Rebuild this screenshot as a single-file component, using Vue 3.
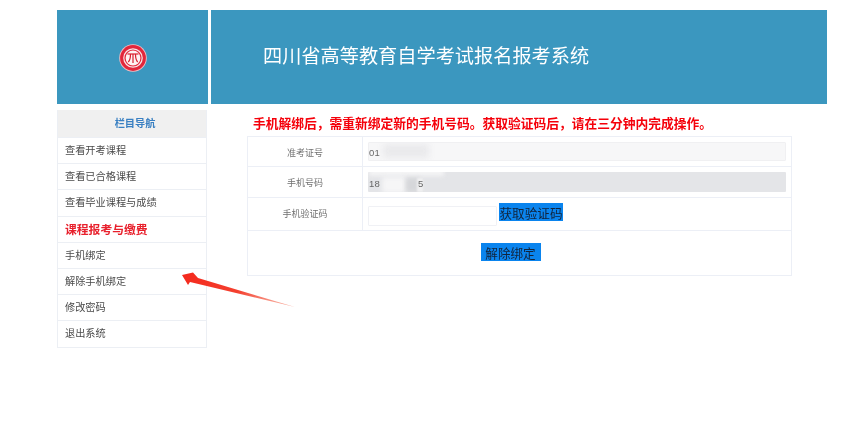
<template>
  <div class="page">
    <header class="top">
      <div class="logo-box">
        <svg class="logo" width="28" height="28" viewBox="0 0 28 28">
          <circle cx="14" cy="14" r="13.8" fill="#f2bcc1" />
          <circle cx="14" cy="14" r="12.9" fill="#e2263b" />
          <circle cx="14" cy="14" r="9.8" fill="#fae6e7" />
          <circle cx="14" cy="14" r="8.6" fill="#e2263b" />
          <circle cx="14" cy="14" r="7.4" fill="#fdf3f3" />
          <g fill="none" stroke="#d8202f" stroke-width="1.2">
            <path d="M8.5 10h11" />
            <path d="M11.5 10c0 4-.6 6.400-2.200 8" />
            <path d="M16.500 10c0 4 .6 6.400 2.200 8" />
            <path d="M14 10v9" />
          </g>
        </svg>
      </div>
      <div class="title-box">四川省高等教育自学考试报名报考系统</div>
    </header>

    <div class="body">
      <aside class="side">
        <div class="side-head">栏目导航</div>
        <a
          v-for="item in menu"
          :key="item.text"
          class="side-item"
          :class="{ strong: item.strong }"
        >{{ item.text }}</a>
      </aside>

      <main class="main">
        <p class="notice">手机解绑后，需重新绑定新的手机号码。获取验证码后，请在三分钟内完成操作。</p>
        <div class="form">
          <div class="row row-1">
            <div class="label">准考证号</div>
            <div class="field">
              <div class="input input-light">
                <span>01</span>
                <i class="smear smear-a"></i>
              </div>
            </div>
          </div>
          <div class="row row-2">
            <div class="label">手机号码</div>
            <div class="field">
              <div class="input input-grey">
                <i class="smear smear-b"></i>
                <i class="smear smear-c"></i>
                <i class="smear smear-d"></i>
                <i class="smear smear-e"></i>
                <span class="num">18</span><span class="num tail">5</span>
              </div>
            </div>
          </div>
          <div class="row row-3">
            <div class="label">手机验证码</div>
            <div class="field code-field">
              <div class="input input-code"></div>
              <button class="btn btn-code" type="button">获取验证码</button>
            </div>
          </div>
          <div class="row-4">
            <button class="btn" type="button">解除绑定</button>
          </div>
        </div>
      </main>
    </div>

    <svg class="arrow" width="130" height="50" viewBox="0 0 130 50">
      <defs>
        <linearGradient id="arrowFade" x1="0" y1="0" x2="1" y2="0.3">
          <stop offset="0" stop-color="#f4281c" />
          <stop offset="0.6" stop-color="#f4402f" />
          <stop offset="1" stop-color="#f8a090" />
        </linearGradient>
      </defs>
      <polygon
        points="2,15 13,12.5 18,18 115,47 10,22 8,25"
        fill="url(#arrowFade)"
      />
    </svg>
  </div>
</template>

<script setup>
const menu = [
  { text: '查看开考课程' },
  { text: '查看已合格课程' },
  { text: '查看毕业课程与成绩' },
  { text: '课程报考与缴费', strong: true },
  { text: '手机绑定' },
  { text: '解除手机绑定' },
  { text: '修改密码' },
  { text: '退出系统' },
]
</script>

<style>
html,
body {
  margin: 0;
  background: #fff;
  overflow: hidden;
}
</style>

<style scoped>
.page {
  position: relative;
  width: 864px;
  height: 429px;
  box-sizing: border-box;
  padding: 10px 37px 0 57px;
  font-family: "Liberation Sans", "Noto Sans CJK SC", sans-serif;
  color: #555;
  filter: blur(0.45px);
}

.top {
  display: flex;
  gap: 3px;
  height: 94px;
}

.logo-box {
  width: 151px;
  background: #3b97bf;
  display: flex;
  align-items: center;
  justify-content: center;
}

.logo {
  margin-top: 2px;
}

.title-box {
  flex: 1;
  background: #3b97bf;
  color: #fff;
  font-size: 19.2px;
  line-height: 94px;
  padding-left: 52px;
}

.body {
  display: flex;
  margin-top: 6px;
}

.side {
  width: 150px;
  box-sizing: border-box;
  border: 1px solid #eceff4;
  border-top: 0;
}

.side-head {
  height: 27px;
  line-height: 27px;
  background: #f0f0f0;
  color: #3a80c2;
  font-size: 10.2px;
  font-weight: 700;
  text-align: center;
  padding-left: 6px;
}

.side-item {
  display: block;
  height: 26.2px;
  line-height: 26px;
  box-sizing: border-box;
  border-top: 1px solid #eceff4;
  padding-left: 7px;
  font-size: 10.2px;
  color: #4a4a4a;
}

.side-item.strong {
  font-size: 11.8px;
  font-weight: 700;
  color: #e8202c;
}

.main {
  margin-left: 40px;
  width: 545px;
}

.notice {
  margin: 0;
  height: 26px;
  padding: 6px 0 0 6px;
  box-sizing: border-box;
  font-size: 12.75px;
  line-height: 16px;
  font-weight: 700;
  color: #f5000a;
  white-space: nowrap;
}

.form {
  border: 1px solid #eceff6;
  box-sizing: border-box;
  height: 139.5px;
}

.row {
  display: flex;
  box-sizing: border-box;
  border-bottom: 1px solid #eceff6;
}

.row-1 {
  height: 30px;
}

.row-2 {
  height: 30.5px;
}

.row-3 {
  height: 33.5px;
}

.row-4 {
  display: flex;
  justify-content: center;
  padding: 12px 18px 0 0;
}

.label {
  width: 115px;
  flex: none;
  box-sizing: border-box;
  border-right: 1px solid #eceff6;
  font-size: 9px;
  color: #707070;
  display: flex;
  align-items: center;
  justify-content: center;
}

.row-1 .label,
.row-2 .label {
  padding-top: 1px;
}

.field {
  flex: 1;
  padding: 5px 5px 0 5px;
  display: flex;
  align-items: flex-start;
}

.input {
  position: relative;
  overflow: hidden;
  box-sizing: border-box;
  flex: 1;
  height: 19px;
  font-size: 9.5px;
  color: #666;
  border-radius: 1px;
}

.input-light {
  background: #f7f7f8;
  border: 1px solid #f0f0f2;
  line-height: 20px;
  letter-spacing: 0.3px;
}

.input-grey {
  background: #e4e5e8;
  height: 20px;
  margin-top: -0.5px;
  padding-left: 1px;
  line-height: 23px;
  letter-spacing: 0.3px;
}

.num {
  position: relative;
}

.tail {
  position: absolute;
  left: 50px;
}

.code-field {
  gap: 2px;
  padding-top: 0;
}

.input-code {
  flex: none;
  width: 129px;
  margin-top: 8px;
  height: 20px;
  background: #fff;
  border: 1px solid #f0f1f5;
}

.btn {
  border: 0;
  padding: 2px 0 0;
  margin: 0;
  width: 60px;
  height: 18px;
  background: #0a84ee;
  color: #12233a;
  font-family: inherit;
  font-size: 12.6px;
  line-height: 18px;
  white-space: nowrap;
  display: block;
  overflow: visible;
  box-sizing: border-box;
}

.btn-code {
  width: 64px;
  margin-top: 5px;
}

.smear {
  position: absolute;
  display: block;
}

.smear-a {
  left: 14px;
  top: 1px;
  width: 46px;
  height: 14px;
  background: #eaeaec;
  filter: blur(3px);
}

.smear-b {
  left: 1px;
  top: -4px;
  width: 75px;
  height: 8px;
  background: #f4f4f5;
  filter: blur(2px);
}

.smear-c {
  left: 14px;
  top: 5px;
  width: 24px;
  height: 16px;
  background: #f6f6f7;
  filter: blur(2.5px);
}

.smear-d {
  left: 38px;
  top: 6px;
  width: 14px;
  height: 14px;
  background: #d6d7da;
  filter: blur(2px);
}

.smear-e {
  left: 49px;
  top: 6px;
  width: 6px;
  height: 14px;
  background: #f0f0f1;
  filter: blur(1px);
}

.arrow {
  position: absolute;
  left: 180px;
  top: 260px;
}
</style>
